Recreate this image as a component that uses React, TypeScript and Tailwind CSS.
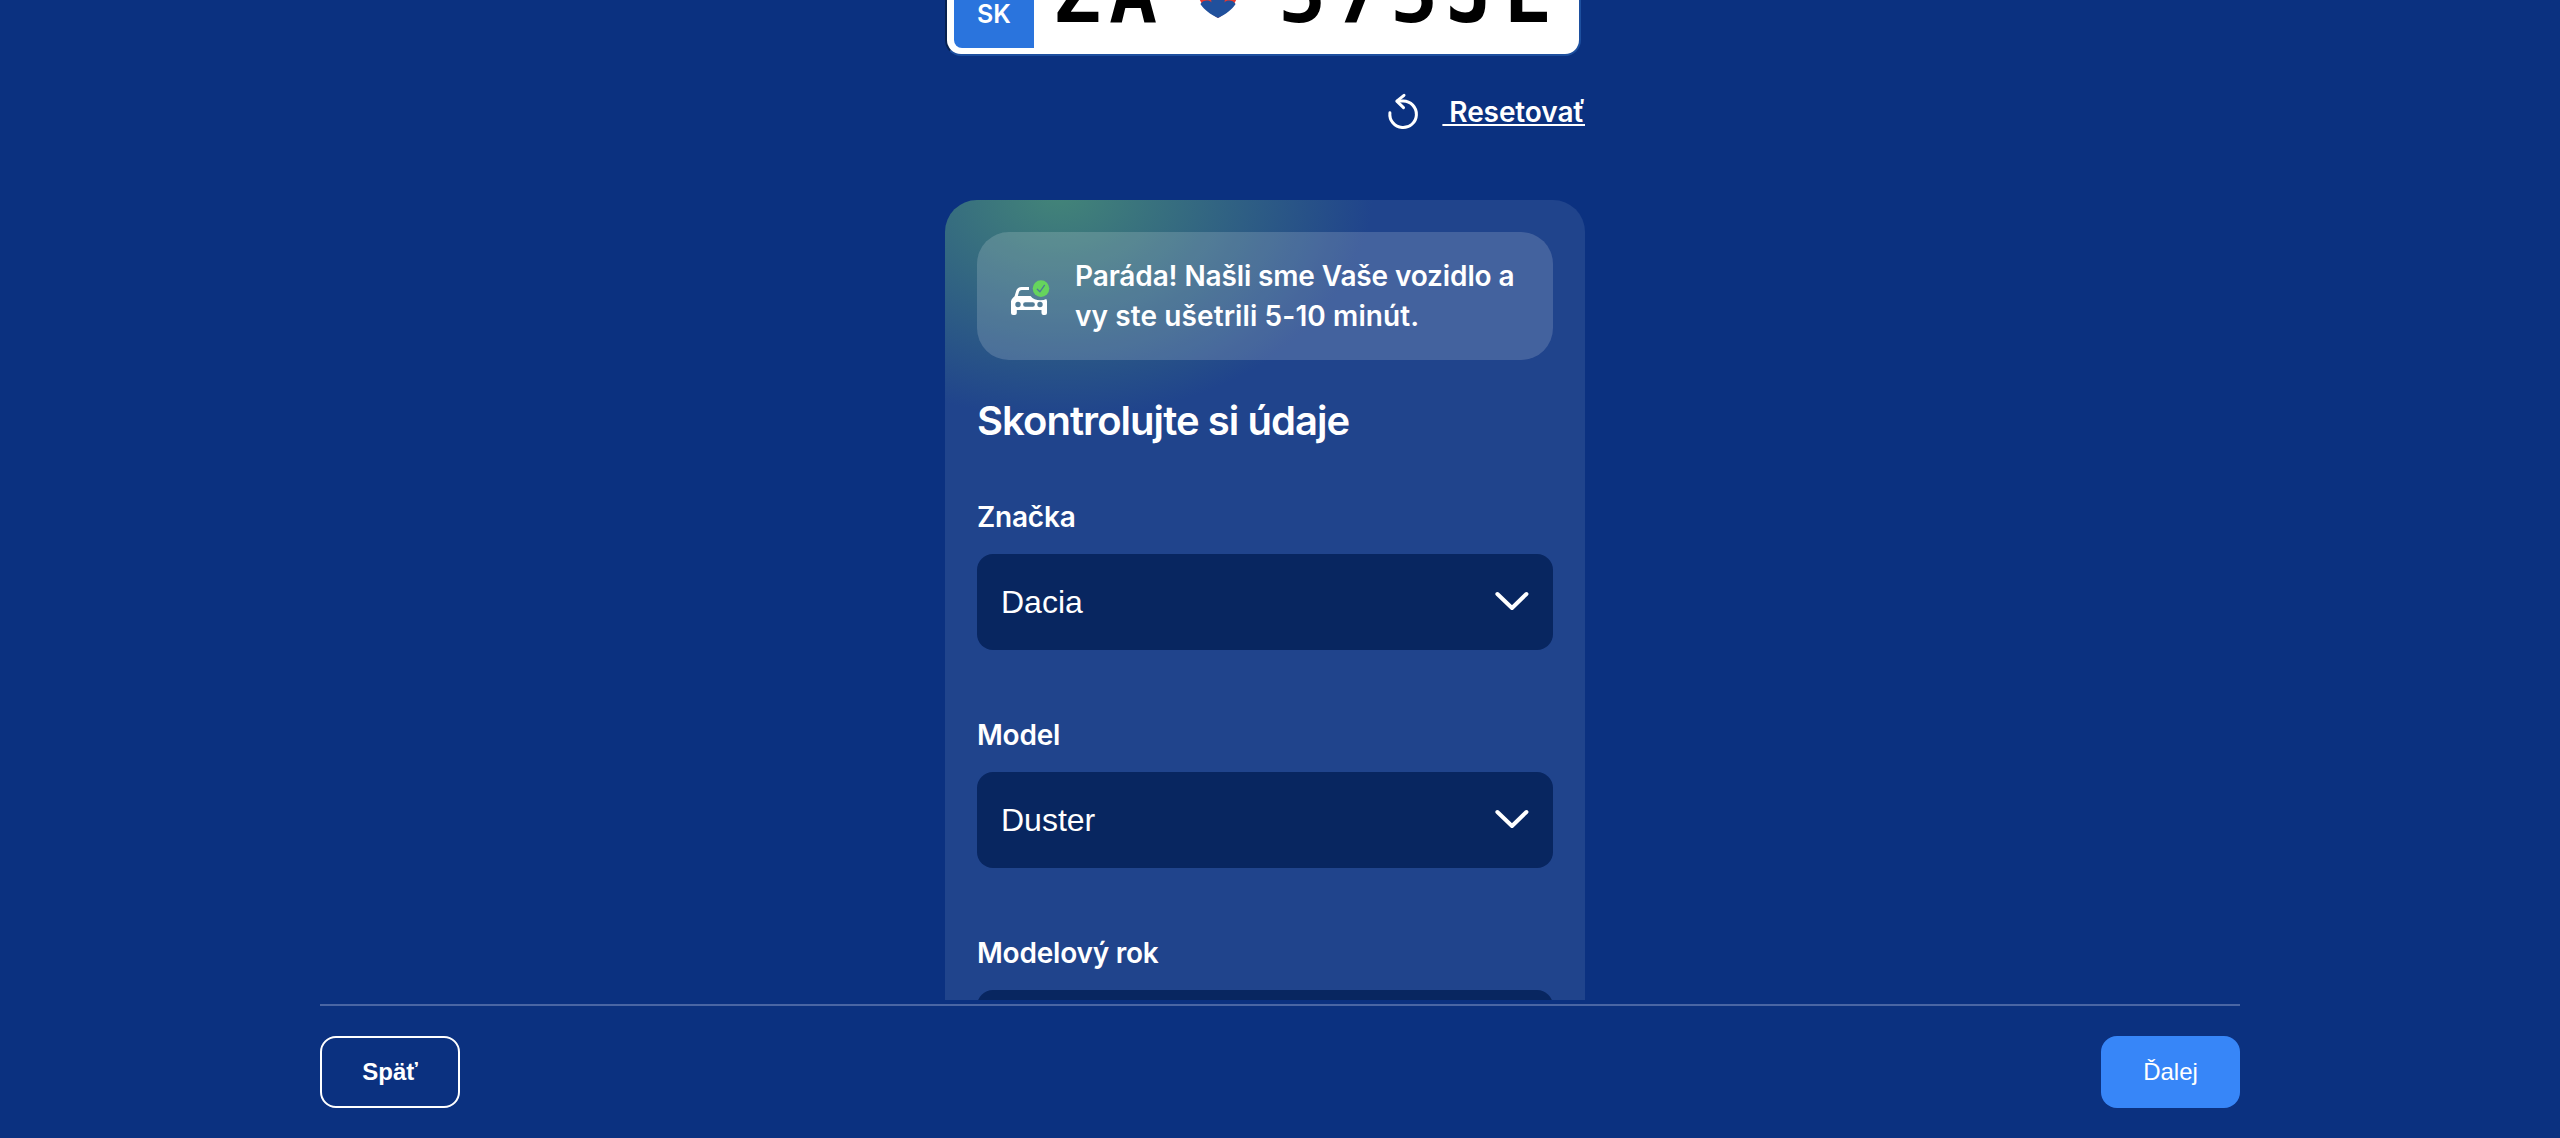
function Label({ text }: { text: string }) {
  return (
    <div className="h-[57px] font-['Inter',sans-serif] text-[28px] font-semibold leading-[40px] tracking-[-0.22px]">{text}</div>
  );
}

function Select({ label, value }: { label: string; value: string }) {
  return (
    <div className="mb-[65px]">
      <Label text={label} />
      <div className="flex h-24 items-center justify-between rounded-2xl bg-[#082660] px-6 text-[32px]">
        <span>{value}</span>
        <svg width="34" height="24" viewBox="0 0 34 24" fill="none" stroke="#fff" strokeWidth="4" strokeLinecap="round" strokeLinejoin="round">
          <path d="M2.4 4L17 18L31.4 4" />
        </svg>
      </div>
    </div>
  );
}

function Shield() {
  return (
    <svg className="ml-[32px] mr-[39px] shrink-0" width="42" height="54" viewBox="0 0 42 54">
      <path d="M0 0H42V22C42 38 33 47 21 54C9 47 0 38 0 22Z" fill="#e8392f" />
      <path d="M3.4 40C6 36 12 35.5 14.5 38.5C13 32 17 28 21 28C25 28 29 32 27.5 38.5C30 35.5 36 36 38.6 40C34.5 46 29 50 21 54C13 50 7.5 46 3.4 40Z" fill="#20509c" />
    </svg>
  );
}

function Plate() {
  return (
    <div className="h-14 w-[636px] overflow-hidden rounded-b-[16px] border-b-2 border-l-2 border-r-2 border-b-[#1d4f9f] border-l-[#06204f] border-r-[#1d4f9f] bg-white">
      <div className="-mt-[66px] flex h-[120px] items-stretch pl-[7px]">
        <div className="mb-[6px] flex w-20 shrink-0 items-end justify-center rounded-bl-lg bg-[#2a74dd] pb-[19px] font-['Inter',sans-serif] text-[25px] font-semibold leading-[30px]">SK</div>
        <div className="flex items-end pb-[36px] pl-[19px] font-['DejaVu_Sans_Mono',monospace] text-[80px] font-bold leading-none tracking-[7.84px] text-black">
          <span className="h-[63px]">ZA</span>
          <Shield />
          <span className="h-[63px]">575JL</span>
        </div>
      </div>
    </div>
  );
}

function ResetIcon() {
  return (
    <svg width="32" height="38" viewBox="0 0 32 38" fill="none" stroke="#fff" strokeWidth="3" strokeLinecap="round" strokeLinejoin="round">
      <path d="M2.9 19.8A13.3 13.3 0 1 0 16.2 8H10.5" />
      <path d="M17 2.3L9.8 8.2L16.5 14.6" />
    </svg>
  );
}

function CarIcon() {
  return (
    <svg className="mt-1 shrink-0" width="40" height="36" viewBox="0 0 40 36">
      <path d="M5.8 17.5L7.6 11.4Q8.5 8.4 11.6 8.4H19" fill="none" stroke="#fff" strokeWidth="3" />
      <path
        fill="#fff"
        fillRule="evenodd"
        d="M5.5 16H20.5Q24 20.3 30.5 20.3Q34 20.3 36.3 19L37 21V33Q37 35 35 35H33.5Q31.5 35 31.5 33V30H6.8V33Q6.8 35 4.8 35H3Q1 35 1 33V21.5Q1.5 18 5.5 16ZM8 21.8A2.7 2.7 0 1 0 8 27.2A2.7 2.7 0 1 0 8 21.8ZM15.3 22.3A2.2 2.2 0 0 0 15.3 26.7H22.7A2.2 2.2 0 0 0 22.7 22.3ZM30 21.8A2.7 2.7 0 1 0 30 27.2A2.7 2.7 0 1 0 30 21.8Z"
      />
      <circle cx="31" cy="8.6" r="8.3" fill="#66d45d" />
      <path d="M27.3 9.2L29.9 11.8L34.4 5.4" fill="none" stroke="#4b7b96" strokeWidth="1.3" strokeLinecap="round" strokeLinejoin="round" />
    </svg>
  );
}

export default function App() {
  return (
    <div className="flex h-[1138px] flex-col overflow-hidden bg-[#0b3180] font-['Liberation_Sans',sans-serif] text-white">
      <main className="h-[1000px] shrink-0 overflow-hidden">
        <div className="ml-[945px] w-[640px]">
          <Plate />
          <div className="mt-9 flex h-10 items-center justify-end">
            <ResetIcon />
            <a className="ml-[23px] whitespace-pre font-['Inter',sans-serif] text-[28px] font-semibold leading-[40px] tracking-[-0.1px] underline decoration-2 underline-offset-[2px]">{"\u00a0Resetovať"}</a>
          </div>
          <section className="mt-[68px] rounded-t-[32px] bg-[#20448c] bg-[radial-gradient(314px_226px_at_114px_-8px,#438578,#20448c)] p-8">
            <div className="flex h-32 items-center rounded-[32px] bg-white/16 pl-[33px]">
              <CarIcon />
              <p className="ml-[25px] font-['Inter',sans-serif] text-[28px] font-semibold leading-[40px] tracking-[-0.13px]">
                Paráda! Našli sme Vaše vozidlo a
                <br />
                <span className="tracking-[0.1px]">vy ste ušetrili 5-10 minút.</span>
              </p>
            </div>
            <h2 className="mb-[52px] mt-[37px] font-['Inter',sans-serif] text-[40px] font-semibold leading-[48px] tracking-[-0.95px]">Skontrolujte si údaje</h2>
            <Select label="Značka" value="Dacia" />
            <Select label="Model" value="Duster" />
            <Select label="Modelový rok" value="" />
          </section>
        </div>
      </main>
      <footer className="mx-auto mt-1 flex w-[1920px] items-start justify-between border-t-2 border-[#4a66a4] pt-[30px] text-2xl">
        <button className="h-[72px] w-[140px] rounded-2xl border-2 border-white font-bold">Späť</button>
        <button className="h-[72px] w-[139px] rounded-2xl bg-[#3786f8]">Ďalej</button>
      </footer>
    </div>
  );
}
